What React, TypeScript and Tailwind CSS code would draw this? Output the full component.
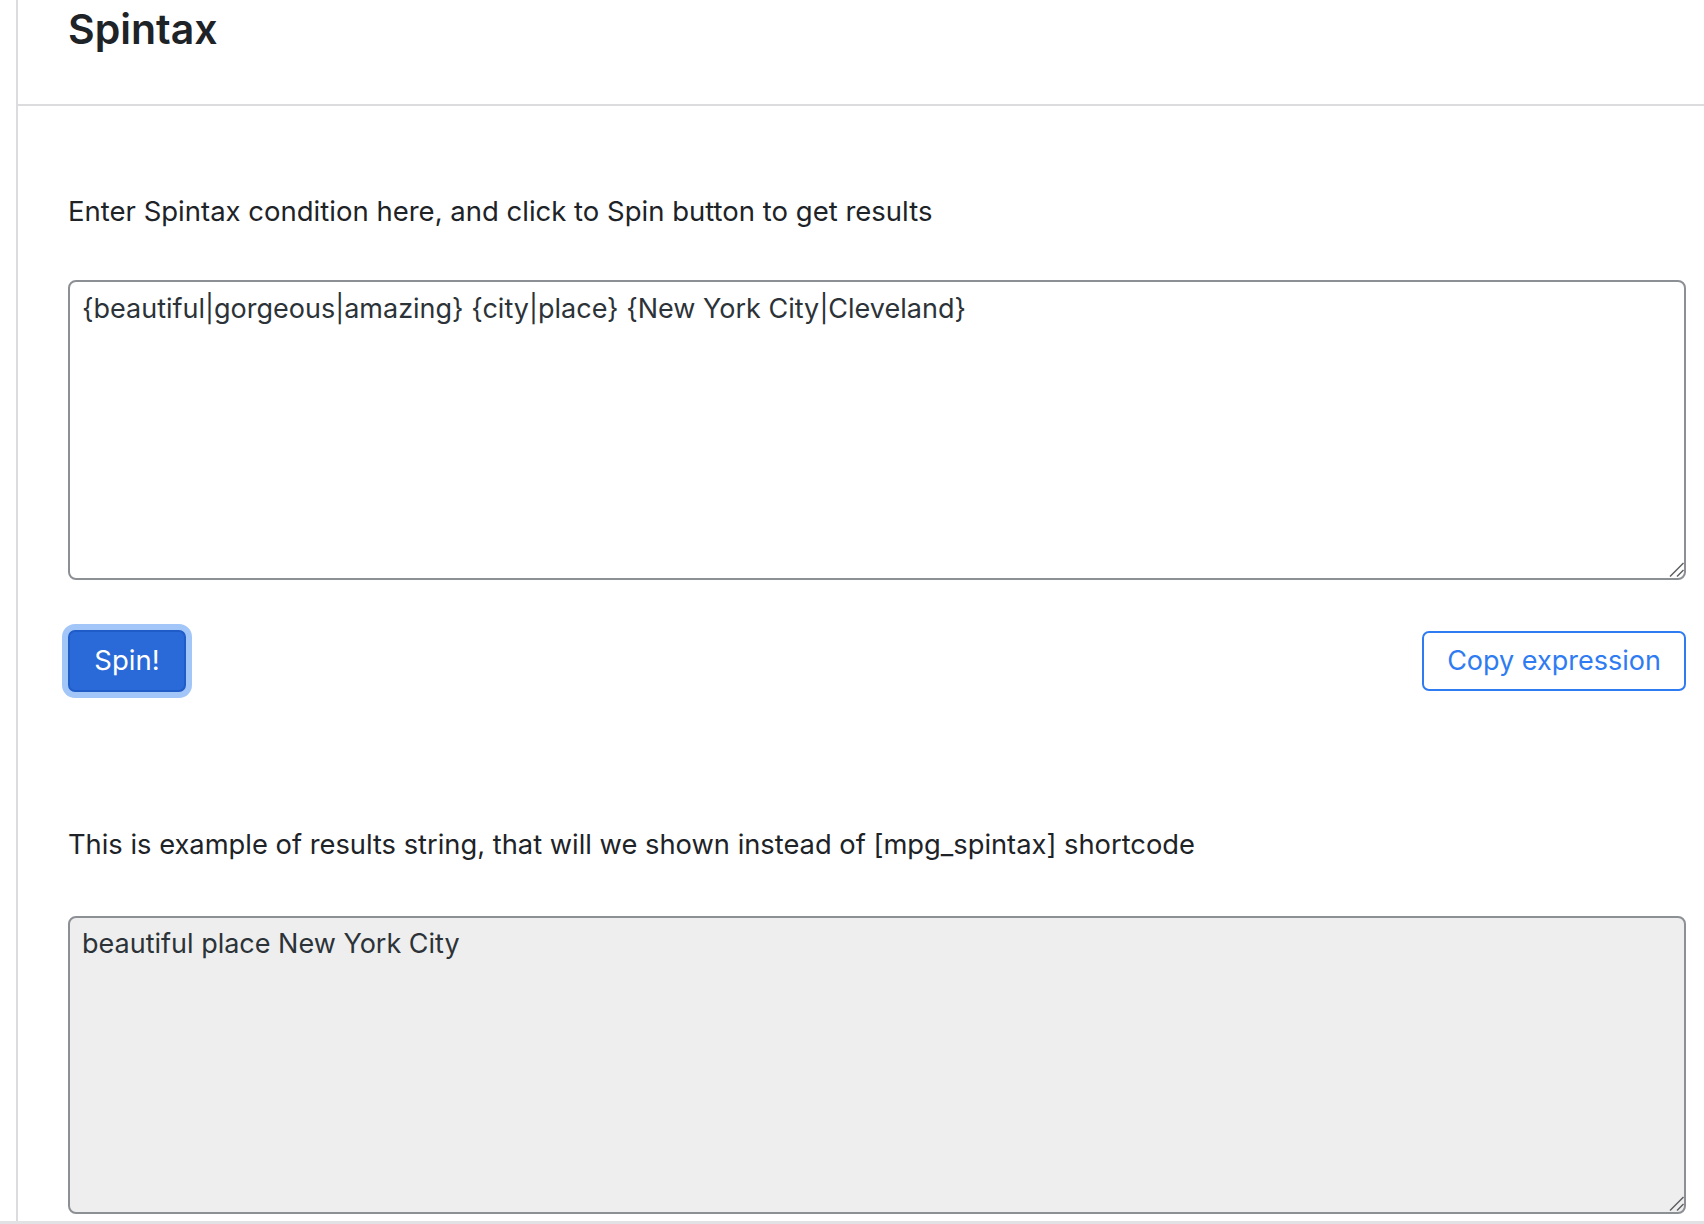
import React from "react";

function Grip() {
  return (
    <svg
      className="absolute right-[2px] bottom-[2px] pointer-events-none"
      width="16"
      height="16"
      viewBox="0 0 16 16"
    >
      <line x1="2" y1="14.5" x2="15.5" y2="1" stroke="#5a5d61" strokeWidth="1.4" />
      <line x1="9" y1="14.5" x2="15.5" y2="8" stroke="#5a5d61" strokeWidth="1.4" />
    </svg>
  );
}

export default function App() {
  const font = { fontFamily: "Inter, 'Noto Sans', sans-serif" } as React.CSSProperties;
  return (
    <div className="w-[1704px] h-[1224px] flex flex-col bg-white overflow-hidden text-[#1d2327]" style={font}>
      <div className="flex flex-1 min-h-0">
        <div className="w-[18px] shrink-0 border-r-2 border-[#dcdcde]" />
        <div className="flex-1 flex flex-col min-w-0">
          <div className="h-[106px] border-b-2 border-[#dcdcde] pl-[50px] pt-[8px]">
            <h1 className="text-[41px] leading-[42px] font-semibold">Spintax</h1>
          </div>
          <div className="pl-[50px] pr-[18px] pt-[87px] flex flex-col">
            <p className="text-[27.5px] leading-[36px]">
              Enter Spintax condition here, and click to Spin button to get results
            </p>
            <div className="relative mt-[51px] h-[300px]">
              <textarea
                className="block h-full w-full resize-none border-2 border-[#8c8f94] rounded-lg px-[12px] pt-[9px] text-[27px] leading-[36px] text-[#2c3338] bg-white outline-none"
                style={font}
                defaultValue="{beautiful|gorgeous|amazing} {city|place} {New York City|Cleveland}"
              />
              <Grip />
            </div>
            <div className="mt-[50px] flex items-center justify-between">
              <button
                className="w-[118px] h-[62px] rounded-[7px] bg-[#2a6ad8] border-2 border-[#1f5cc8] text-white text-[27.5px] ring-[6px] ring-[#a2c6f8]"
                style={font}
              >
                Spin!
              </button>
              <button
                className="w-[264px] h-[60px] rounded-[7px] border-2 border-[#2f7cf2] text-[#2f7cf2] text-[27px] bg-white"
                style={font}
              >
                Copy expression
              </button>
            </div>
            <p className="mt-[135px] text-[27.3px] leading-[36px]">
              This is example of results string, that will we shown instead of [mpg_spintax] shortcode
            </p>
            <div className="relative mt-[53px] h-[298px]">
              <textarea
                readOnly
                className="block h-full w-full resize-none border-2 border-[#8c8f94] rounded-lg px-[12px] pt-[8px] text-[27px] leading-[36px] text-[#2c3338] bg-[#eeeeee] outline-none"
                style={font}
                defaultValue="beautiful place New York City"
              />
              <Grip />
            </div>
          </div>
        </div>
      </div>
      <div className="h-[3px] bg-[#e2e2e4]" />
    </div>
  );
}
